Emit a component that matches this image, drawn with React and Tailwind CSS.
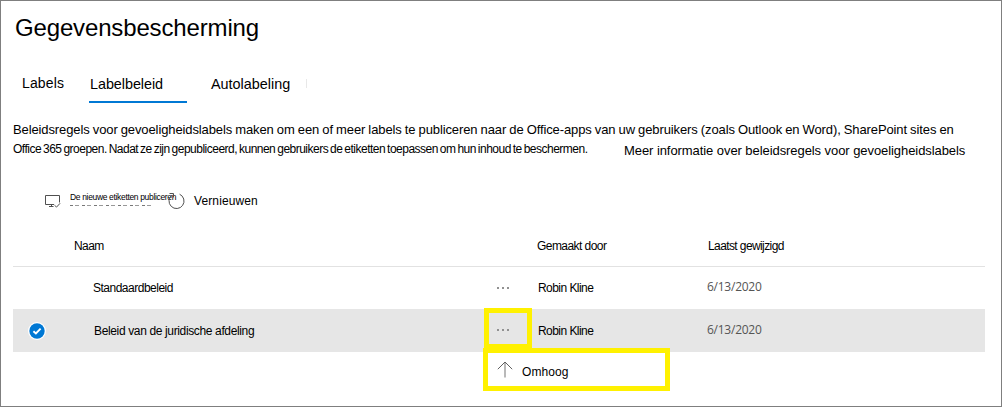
const columns = 'grid grid-cols-[61px_410px_53px_170px_1fr]'

function PublishIcon() {
  return (
    <svg width="18" height="16" viewBox="0 0 18 16" fill="none" stroke="#505050" strokeWidth="1">
      <path d="M10 9.5H1.5V0.5H15.5V7.5" />
      <path d="M7.5 9.5V11.5M5 11.5H9.5" />
      <path d="M10.5 10.2l2 1.9 3.6-3.8" />
    </svg>
  )
}

function RefreshIcon() {
  return (
    <svg width="20" height="20" viewBox="0 0 20 20" fill="none" stroke="#505050" strokeWidth="1">
      <path d="M12.6 3.2A7.5 7.5 0 1 1 5.2 3.9" />
      <path d="M2.5 2.5H6.5V6.5" />
    </svg>
  )
}

function ArrowUpIcon() {
  return (
    <svg width="16" height="17" viewBox="0 0 16 17" fill="none">
      <path d="M8 1.5V16.5" stroke="#8a8a8a" strokeWidth="1.2" />
      <path d="M0.8 8.2L8 1L15.2 8.2" stroke="#606060" strokeWidth="1" />
    </svg>
  )
}

function CheckIcon() {
  return (
    <svg width="18" height="18" viewBox="0 0 18 18" fill="none">
      <circle cx="9" cy="9" r="9" fill="#fff" />
      <circle cx="9" cy="9" r="7.7" fill="#0078d4" />
      <path d="M5.4 9.2L7.9 11.5L12.6 6.6" stroke="#fff" strokeWidth="1.9" />
    </svg>
  )
}

function Dots() {
  return (
    <div className="flex gap-[3px]">
      <i className="size-[2px] bg-[#919191]" />
      <i className="size-[2px] bg-[#919191]" />
      <i className="size-[2px] bg-[#919191]" />
    </div>
  )
}

function PolicyRow({ name, selected, children }) {
  return (
    <div className={selected ? `${columns} h-[43px] bg-[#e6e6e6]` : `${columns} h-[42px]`}>
      <div className="pt-[13px] pl-[15px]">{selected && <CheckIcon />}</div>
      {children && <div className="pt-3 pl-5 tracking-[-0.36px]">{name}</div>}
      {!children && <div className="pt-[11px] pl-[19px] tracking-[-0.5px]">{name}</div>}
      <div className="relative">
        <div className="pt-5 pl-[13px]"><Dots /></div>
        {children}
      </div>
      <div className={selected ? 'pt-3 pl-px tracking-[-0.55px]' : 'pt-[11px] pl-px tracking-[-0.55px]'}>Robin Kline</div>
      <div className={selected ? "pt-[11px] font-['Open_Sans',sans-serif] tracking-[-0.25px] text-[#555]" : "pt-[10px] font-['Open_Sans',sans-serif] tracking-[-0.25px] text-[#555]"}>6/13/2020</div>
    </div>
  )
}

export default function App() {
  return (
    <div className="h-[407px] w-[1002px] overflow-hidden border border-[#7f7f7f] bg-white font-['Liberation_Sans',sans-serif] text-[12px] leading-5 whitespace-nowrap text-black">
      <h1 className="mt-[11px] ml-[14px] h-8 text-[24px] leading-8 tracking-[-0.15px]">Gegevensbescherming</h1>

      <nav className="mt-[29px] ml-[21px] flex h-[29px] items-start text-[14.4px]">
        <div className="w-[67px] text-[14px] tracking-[0.15px]">Labels</div>
        <div className="mr-[24px] h-[30px] w-[98px] border-b-[2px] border-[#0078d4] pt-px pl-px tracking-[-0.05px]">Labelbeleid</div>
        <div className="w-[95px] pt-px">Autolabeling</div>
        <div className="mt-[6px] h-[9px] w-px bg-[#e8e8e8]" />
      </nav>

      <div className="mt-[18px] ml-[12px] text-[13px]">
        <p className="h-5 tracking-[-0.11px] [word-spacing:-0.37px]">
          Beleidsregels voor gevoeligheidslabels maken om een of meer labels te publiceren naar de Office-apps van uw gebruikers (zoals Outlook en Word), SharePoint sites en
        </p>
        <div className="flex items-start">
          <p className="-mt-px w-[611px] text-[12px] tracking-[-0.51px] [word-spacing:-0.88px]">
            Office 365 groepen. Nadat ze zijn gepubliceerd, kunnen gebruikers de etiketten toepassen om hun inhoud te beschermen.
          </p>
          <a className="pt-px tracking-[-0.07px]">Meer informatie over beleidsregels voor gevoeligheidslabels</a>
        </div>
      </div>

      <div className="mt-[28px] ml-[43px] flex h-[25px] items-start">
        <div className="mt-[6px] w-[26px]"><PublishIcon /></div>
        <div className="w-[97px]">
          <div className="h-[15px] text-[8.5px] leading-[16px] tracking-[-0.34px]">De nieuwe etiketten publiceren</div>
          <div className="mt-px h-px w-[82px] bg-[repeating-linear-gradient(90deg,#777_0_3px,transparent_3px_5px,#999_5px_9px,transparent_9px_12px)]" />
        </div>
        <div className="mt-[2px] w-[27px]"><RefreshIcon /></div>
        <div className="pt-[2px] tracking-[0.12px]">Vernieuwen</div>
      </div>

      <div className="mt-[22px] ml-[12px] w-[972px]">
        <div className={`${columns} h-[31px] border-b border-[#e2e2e2]`}>
          <div />
          <div className="tracking-[-0.55px]">Naam</div>
          <div />
          <div className="tracking-[-0.55px]">Gemaakt door</div>
          <div className="pl-px tracking-[-0.6px]">Laatst gewijzigd</div>
        </div>
        <PolicyRow name="Standaardbeleid" />
        <PolicyRow name="Beleid van de juridische afdeling" selected>
          <div className="absolute top-[-1px] left-0 h-[41px] w-[48px] border-[5px] border-[#fff100]" />
          <div className="absolute top-[39px] left-[-1px] flex h-[43px] w-[187px] border-[5px] border-[#fff100] bg-white pl-[9px]">
            <div className="w-[25px] pt-[8px]"><ArrowUpIcon /></div>
            <div className="pt-[9px] tracking-[0.1px]">Omhoog</div>
          </div>
        </PolicyRow>
      </div>
    </div>
  )
}
